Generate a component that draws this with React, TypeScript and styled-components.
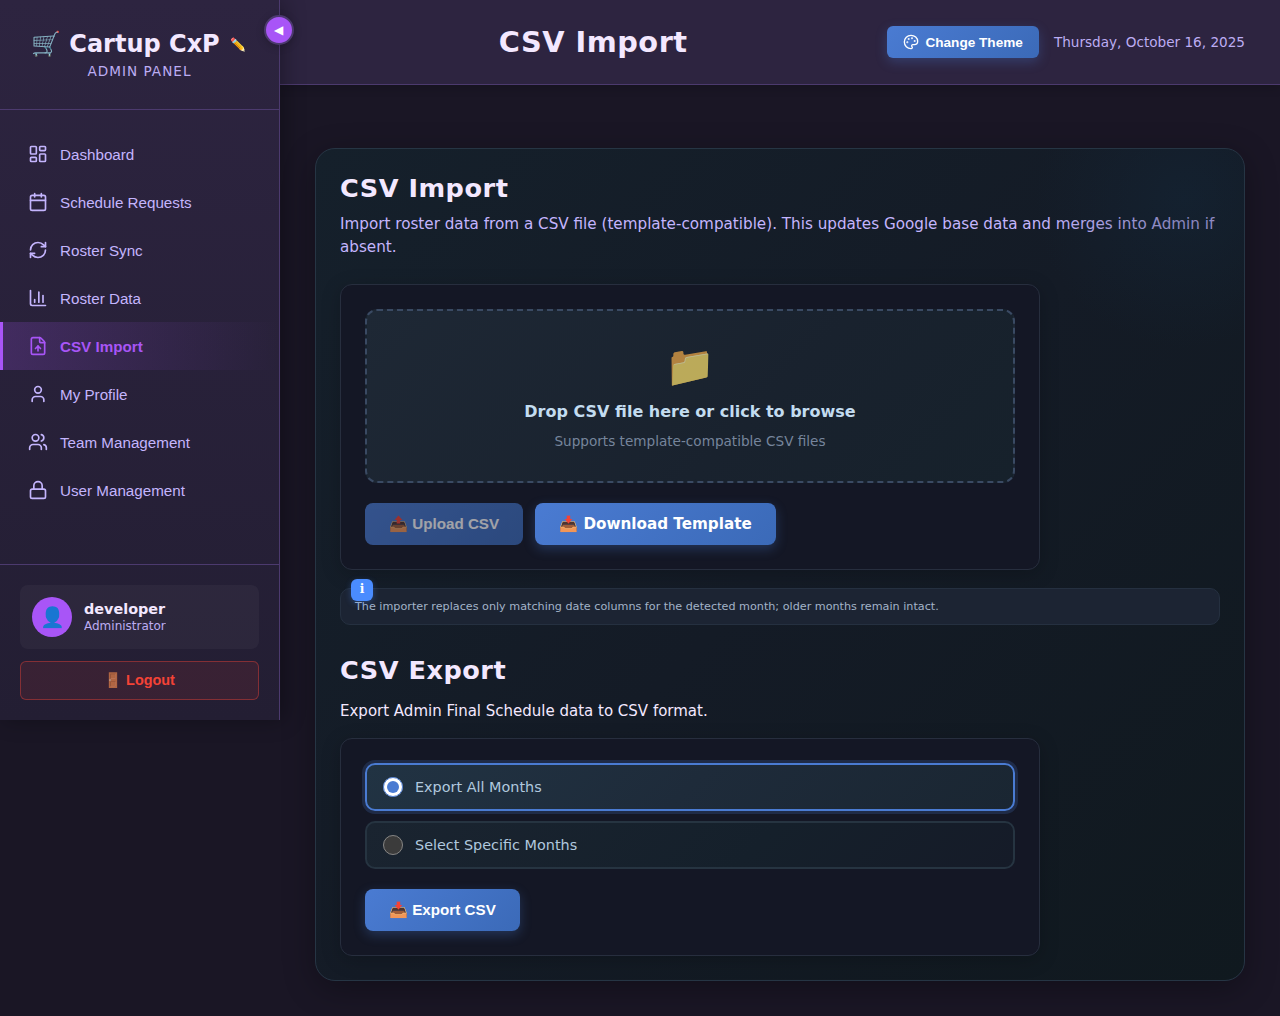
import React, { useState } from 'react';
import styled, { createGlobalStyle, css } from 'styled-components';
import {
  Calendar,
  ChartColumn,
  FileUp,
  LayoutDashboard,
  Lock,
  Palette,
  RefreshCw,
  User,
  Users,
} from 'lucide-react';

const sans = `"DejaVu Sans", sans-serif`;
const arial = `"Liberation Sans", Arial, sans-serif`;

const GlobalStyle = createGlobalStyle`
  *, *::before, *::after { box-sizing: border-box; }
  body {
    margin: 0;
    background: #1a1625;
    color: #f3e8ff;
    font-family: ${sans};
  }
  button { font-family: ${arial}; cursor: pointer; }
  h1, h2, p { margin: 0; }
`;

const Shell = styled.div`
  display: flex;
  align-items: flex-start;
  min-height: 1016px;
`;

const Sidebar = styled.aside`
  position: relative;
  z-index: 2;
  flex: 0 0 280px;
  height: 720px;
  display: flex;
  flex-direction: column;
  background: linear-gradient(180deg, #2d2440 0%, #231e33 100%);
  border-right: 1px solid #4c3a6e;
  box-shadow: 4px 0 20px rgba(0, 0, 0, 0.3);
`;

const Toggle = styled.button`
  position: absolute;
  top: 15px;
  right: -15px;
  width: 30px;
  height: 30px;
  padding: 0 1px 0 0;
  display: flex;
  align-items: center;
  justify-content: center;
  border: 2px solid #4c3a6e;
  border-radius: 50%;
  background: #a855f7;
  color: #fff;
  font-size: 12px;
  box-shadow: 0 2px 8px rgba(0, 0, 0, 0.2);
`;

const Brand = styled.div`
  height: 110px;
  padding: 30px 20px 0;
  border-bottom: 1px solid #4c3a6e;
  text-align: center;
`;

const BrandName = styled.h1`
  display: flex;
  align-items: center;
  justify-content: center;
  gap: 8px;
  height: 28px;
  padding-right: 2px;
  font-size: 24px;
  line-height: 28px;
  font-weight: 700;
  color: #f3e8ff;
  white-space: nowrap;
`;

const Cart = styled.span`
  font-weight: 400;
`;

const Pencil = styled.span`
  margin-left: 2px;
  padding-top: 1px;
  font-size: 12.8px;
  font-weight: 400;
`;

const BrandSub = styled.p`
  margin-top: 5px;
  font-size: 13.6px;
  line-height: 16px;
  letter-spacing: 1px;
  color: #c4b5fd;
  opacity: 0.95;
`;

const Nav = styled.nav`
  flex: 1;
  padding: 20px 0;
`;

const NavItem = styled.button<{ $active?: boolean }>`
  display: flex;
  align-items: center;
  gap: 12px;
  width: 100%;
  height: 48px;
  padding: 0 25px;
  border: 0;
  border-left: 3px solid transparent;
  background: none;
  color: #c4b5fd;
  font-size: 15.2px;
  text-align: left;
  ${(p) =>
    p.$active &&
    css`
      border-left-color: #a855f7;
      background: linear-gradient(90deg, rgba(168, 85, 247, 0.2), rgba(168, 85, 247, 0));
      color: #a855f7;
      font-weight: 600;
    `}
`;

const SideFooter = styled.div`
  padding: 20px;
  border-top: 1px solid #4c3a6e;
`;

const UserCard = styled.div`
  display: flex;
  align-items: center;
  gap: 12px;
  height: 64px;
  padding: 12px;
  border-radius: 8px;
  background: rgba(255, 255, 255, 0.04);
`;

const Avatar = styled.div`
  display: flex;
  align-items: center;
  justify-content: center;
  width: 40px;
  height: 40px;
  border-radius: 50%;
  background: #a855f7;
  font-size: 20px;
`;

const UserName = styled.div`
  font-size: 14.4px;
  line-height: 17px;
  font-weight: 600;
  color: #f3e8ff;
`;

const UserRole = styled.div`
  font-size: 12px;
  line-height: 16px;
  color: #c4b5fd;
  opacity: 0.95;
`;

const Logout = styled.button`
  width: 100%;
  height: 39px;
  margin-top: 12px;
  padding: 0;
  border: 1px solid rgba(244, 67, 54, 0.4);
  border-radius: 6px;
  background: rgba(244, 67, 54, 0.1);
  color: #f44336;
  font-size: 14.4px;
  font-weight: 600;
`;

const Main = styled.main`
  flex: 1;
  min-width: 0;
`;

const Header = styled.header`
  display: flex;
  align-items: center;
  gap: 16px;
  height: 85px;
  padding: 0 35px;
  background: #2d2440;
  border-bottom: 1px solid #4c3a6e;
  box-shadow: 0 2px 10px rgba(0, 0, 0, 0.2);
`;

const PageTitle = styled.h1`
  flex: 1;
  font-size: 28.8px;
  font-weight: 600;
  letter-spacing: 0.5px;
  text-align: center;
  color: #f3e8ff;
`;

const HeaderTools = styled.div`
  display: flex;
  align-items: center;
  gap: 15px;
`;

const blue = css`
  border: 0;
  border-radius: 8px;
  background: linear-gradient(135deg, #4a7bd2 0%, #3b6ab8 100%);
  color: #fff;
  font-weight: 600;
  box-shadow: 0 4px 12px rgba(74, 123, 210, 0.3);
`;

const ThemeButton = styled.button`
  ${blue}
  display: flex;
  align-items: center;
  gap: 6px;
  height: 32px;
  padding: 0 16px;
  border-radius: 6px;
  font-size: 13.6px;
`;

const Today = styled.span`
  font-size: 13.6px;
  color: #c4b5fd;
  opacity: 0.95;
  white-space: nowrap;
`;

const Content = styled.section`
  padding: 63px 35px 35px;
`;

const Panel = styled.div`
  position: relative;
  height: 833px;
  padding: 24px;
  overflow: hidden;
  border: 1px solid #263544;
  border-radius: 20px;
  background: linear-gradient(135deg, #15202b 0%, #141b26 50%, #10191f 100%);
`;

const PanelShadow = styled.div`
  border-radius: 20px;
  box-shadow: 0 8px 32px rgba(0, 0, 0, 0.3);
`;

const Glow = styled.div`
  position: absolute;
  top: -100px;
  right: -90px;
  width: 300px;
  height: 300px;
  pointer-events: none;
  background: radial-gradient(circle, rgba(20, 42, 62, 0.4) 0%, transparent 70%);
`;

const Title = styled.h2<{ $top?: number }>`
  margin-top: ${(p) => p.$top ?? 0}px;
  font-size: 25.6px;
  line-height: 30px;
  font-weight: 700;
  letter-spacing: 0.5px;
  color: #f3e8ff;
`;

const Lead = styled.p`
  margin-top: 10px;
  font-size: 15.2px;
  line-height: 23px;
  color: #c4b5fd;
`;

const ExportLead = styled.p`
  margin-top: 17px;
  font-size: 15px;
  line-height: 19px;
`;

const Card = styled.div<{ $top: number }>`
  max-width: 700px;
  margin-top: ${(p) => p.$top}px;
  padding: 24px;
  border: 1px solid #272e3e;
  border-radius: 12px;
  background: #141725;
  box-shadow: 0 4px 20px rgba(0, 0, 0, 0.2);
`;

const DropZone = styled.div`
  display: flex;
  flex-direction: column;
  align-items: center;
  height: 174px;
  padding-top: 28px;
  border: 2px dashed #3a4a63;
  border-radius: 12px;
  background: linear-gradient(135deg, #1e2835 0%, #19222e 60%, #16212b 100%);
`;

const Folder = styled.div`
  height: 54px;
  font-size: 40px;
  line-height: 54px;
  opacity: 0.7;
`;

const DropTitle = styled.p`
  margin-top: 9px;
  font-size: 16px;
  line-height: 20px;
  font-weight: 600;
  color: #c3dcf0;
`;

const DropHint = styled.p`
  margin-top: 11px;
  font-size: 13.6px;
  line-height: 17px;
  color: #76859c;
`;

const Actions = styled.div`
  display: flex;
  gap: 12px;
  margin-top: 20px;
`;

const ActionButton = styled.button<{ $wide?: boolean }>`
  ${blue}
  height: 42px;
  padding: 0 24px;
  font-size: 15.2px;
  font-family: ${(p) => (p.$wide ? sans : arial)};
  white-space: nowrap;
  &:disabled {
    opacity: 0.6;
    box-shadow: none;
  }
`;

const Note = styled.div`
  position: relative;
  height: 37px;
  margin-top: 18px;
  padding: 0 14px;
  border: 1px solid #253040;
  border-radius: 10px;
  background: #1c2433;
  color: #a3b3c8;
  font-size: 11.2px;
  line-height: 35px;
`;

const NoteBadge = styled.span`
  position: absolute;
  top: -10px;
  left: 10px;
  width: 22px;
  height: 22px;
  border-radius: 6px;
  background: #4a8cff;
  color: #fff;
  font: 700 12px/21px "DejaVu Serif", serif;
  text-align: center;
  box-shadow: 0 2px 6px rgba(74, 140, 255, 0.3);
`;

const Options = styled.div`
  display: flex;
  flex-direction: column;
  gap: 10px;
`;

const Option = styled.label<{ $on: boolean }>`
  display: flex;
  align-items: center;
  gap: 12px;
  height: 48px;
  padding: 0 16px;
  border: 2px solid ${(p) => (p.$on ? '#4a7bd2' : '#263441')};
  border-radius: 10px;
  background: ${(p) =>
    p.$on
      ? 'linear-gradient(135deg, #213343 0%, #1e2b3a 50%, #1a2632 100%)'
      : 'linear-gradient(135deg, #1a2430 0%, #15202b 60%, #151b28 100%)'};
  box-shadow: ${(p) => (p.$on ? '0 0 0 3px rgba(74, 123, 210, 0.2)' : 'none')};
  color: #b0c8de;
  font-size: 14.4px;
  cursor: pointer;
`;

const Radio = styled.input`
  width: 20px;
  height: 20px;
  margin: 0;
  color-scheme: dark;
  accent-color: #4a7bd2;
`;

const navItems = [
  { label: 'Dashboard', Icon: LayoutDashboard },
  { label: 'Schedule Requests', Icon: Calendar },
  { label: 'Roster Sync', Icon: RefreshCw },
  { label: 'Roster Data', Icon: ChartColumn },
  { label: 'CSV Import', Icon: FileUp },
  { label: 'My Profile', Icon: User },
  { label: 'Team Management', Icon: Users },
  { label: 'User Management', Icon: Lock },
];

const exportModes = ['Export All Months', 'Select Specific Months'];

export default function App() {
  const [page, setPage] = useState('CSV Import');
  const [mode, setMode] = useState(exportModes[0]);

  return (
    <>
      <GlobalStyle />
      <Shell>
        <Sidebar>
          <Toggle>◀</Toggle>
          <Brand>
            <BrandName>
              <Cart>🛒</Cart>
              Cartup CxP
              <Pencil>✏️</Pencil>
            </BrandName>
            <BrandSub>ADMIN PANEL</BrandSub>
          </Brand>
          <Nav>
            {navItems.map(({ label, Icon }) => (
              <NavItem key={label} $active={label === page} onClick={() => setPage(label)}>
                <Icon size={20} strokeWidth={2} />
                {label}
              </NavItem>
            ))}
          </Nav>
          <SideFooter>
            <UserCard>
              <Avatar>👤</Avatar>
              <div>
                <UserName>developer</UserName>
                <UserRole>Administrator</UserRole>
              </div>
            </UserCard>
            <Logout>🚪 Logout</Logout>
          </SideFooter>
        </Sidebar>
        <Main>
          <Header>
            <PageTitle>CSV Import</PageTitle>
            <HeaderTools>
              <ThemeButton>
                <Palette size={16} />
                Change Theme
              </ThemeButton>
              <Today>Thursday, October 16, 2025</Today>
            </HeaderTools>
          </Header>
          <Content>
            <PanelShadow>
              <Panel>
                <Title>CSV Import</Title>
                <Lead>
                  Import roster data from a CSV file (template-compatible). This updates Google base
                  data and merges into Admin if absent.
                </Lead>
                <Card $top={25}>
                  <DropZone>
                    <Folder>📁</Folder>
                    <DropTitle>Drop CSV file here or click to browse</DropTitle>
                    <DropHint>Supports template-compatible CSV files</DropHint>
                  </DropZone>
                  <Actions>
                    <ActionButton disabled>📤 Upload CSV</ActionButton>
                    <ActionButton $wide>📥 Download Template</ActionButton>
                  </Actions>
                </Card>
                <Note>
                  <NoteBadge>i</NoteBadge>
                  The importer replaces only matching date columns for the detected month; older
                  months remain intact.
                </Note>
                <Title $top={30}>CSV Export</Title>
                <ExportLead>Export Admin Final Schedule data to CSV format.</ExportLead>
                <Card $top={17}>
                  <Options>
                    {exportModes.map((m) => (
                      <Option key={m} $on={m === mode}>
                        <Radio type="radio" checked={m === mode} onChange={() => setMode(m)} />
                        {m}
                      </Option>
                    ))}
                  </Options>
                  <Actions>
                    <ActionButton>📥 Export CSV</ActionButton>
                  </Actions>
                </Card>
                <Glow />
              </Panel>
            </PanelShadow>
          </Content>
        </Main>
      </Shell>
    </>
  );
}
